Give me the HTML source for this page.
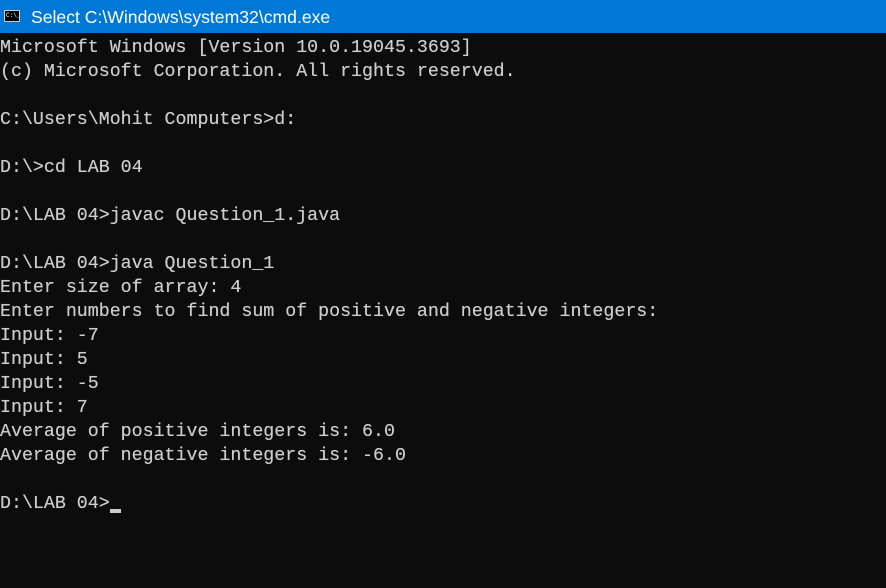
<!DOCTYPE html>
<html><head><style>
html,body{margin:0;padding:0;width:886px;height:588px;overflow:hidden;background:#0c0c0c}
.t{position:absolute;left:0;top:0;width:886px;height:33px;background:#0078d7;color:#fff;font-family:"Liberation Sans",sans-serif;font-size:17.6px}
.ic{position:absolute;left:4px;top:10px;width:16px;height:12px;background:#000;border:1px solid #ccc;box-sizing:border-box;color:#fff;font-size:6px;line-height:10px;padding-left:1px;font-family:"Liberation Mono",monospace}
.tt{position:absolute;left:31px;top:7px}
pre{position:absolute;left:0;top:36px;margin:0;font-family:"Liberation Mono",monospace;font-size:18.3px;line-height:24px;color:#cccccc;text-shadow:0 0 0.4px #ccc}
.cur{display:inline-block;width:11px;height:4px;background:#ccc;vertical-align:-5px}
</style></head><body>
<div class="t"><div class="ic">C:\_</div><div class="tt">Select C:\Windows\system32\cmd.exe</div></div>
<pre>Microsoft Windows [Version 10.0.19045.3693]
(c) Microsoft Corporation. All rights reserved.

C:\Users\Mohit Computers&gt;d:

D:\&gt;cd LAB 04

D:\LAB 04&gt;javac Question_1.java

D:\LAB 04&gt;java Question_1
Enter size of array: 4
Enter numbers to find sum of positive and negative integers:
Input: -7
Input: 5
Input: -5
Input: 7
Average of positive integers is: 6.0
Average of negative integers is: -6.0

D:\LAB 04&gt;<span class="cur"></span></pre>
</body></html>
